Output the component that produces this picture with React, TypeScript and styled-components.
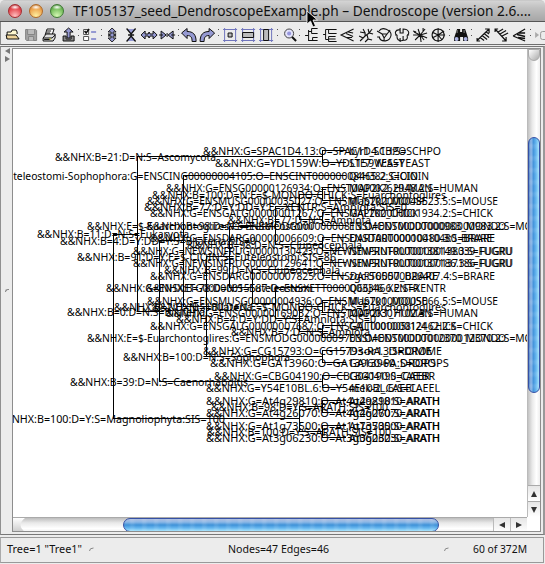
import React from "react";
import styled, { createGlobalStyle } from "styled-components";

const Global = createGlobalStyle`
  * { box-sizing: border-box; }
  body { margin: 0; background: #fff; overflow: hidden; font-family: "Noto Sans", "Open Sans", sans-serif; }
`;

const Win = styled.div`
  width: 545px; height: 564px; display: flex; flex-direction: column;
  background: #ececec; position: relative; overflow: hidden;
`;
const TitleBar = styled.header`
  height: 22px; flex: none; display: flex; align-items: center; padding-left: 8px;
  background: linear-gradient(#d4d4d4, #c0c0c0 35%, #a6a6a6);
  border-bottom: 1px solid #555; border-top: 1px solid #c9c9c9;
  border-radius: 5px 5px 0 0;
`;
const Light = styled.i<{ $c: string; $d: string; $l: string }>`
  width: 14px; height: 14px; border-radius: 50%; margin-right: 7px; flex: none;
  border: 1px solid ${p => p.$d};
  background: radial-gradient(ellipse 5px 2.5px at 50% 18%, #fff, transparent),
    radial-gradient(circle at 50% 90%, ${p => p.$l}, ${p => p.$c} 65%, ${p => p.$d});
`;
const Line = styled.svg`display: block; flex: none; overflow: visible;`;
const ToolBar = styled.nav`
  height: 23px; flex: none; display: flex; align-items: center; padding: 3px 0 0 3px;
  border-left: 1px solid #8a8a8a; border-bottom: 1px solid #6e6e6e; overflow: hidden;
`;
const Tool = styled.svg`width: 18.2px; height: 18px; flex: none; display: block;`;
const Sep = styled.span`
  width: 4.2px; height: 7px; flex: none; display: flex; flex-direction: column; align-items: center;
  justify-content: space-between; margin-bottom: 4px;
  &::before, &::after { content: ""; width: 1px; height: 1px; background: #555; }
`;
const Body = styled.main`
  height: 489px; margin-top: 1px; flex: none; display: grid;
  grid-template-columns: 11px 530px; border: 1px solid #777; border-left-color: #909090;
  border-right: 2px solid #999;
`;
const Gutter = styled.aside`
  display: flex; flex-direction: column; align-items: center; padding-top: 1px;
`;
const Pane = styled.section`
  border: 1px solid #8d8d8d; margin: 1px 1px 2px 0; background: #fff; display: grid;
  grid-template-columns: 514px 1fr; grid-template-rows: 1fr 15px; overflow: hidden;
`;
const Canvas = styled.svg`display: block; width: 514px; height: 468px;`;
const VBar = styled.div`
  display: flex; flex-direction: column; border-left: 1px solid #bbb;
  background: linear-gradient(90deg, #c2c2c2, #e9e9e9 35%, #fff 70%, #eee);
`;
const HBar = styled.div`
  display: flex; border-top: 1px solid #aaa;
  background: linear-gradient(#bdbdbd, #e9e9e9 35%, #fff 75%, #eee);
`;
const Corner = styled.div`
  height: 12px; margin-bottom: 76px; flex: none; border: 1px solid #aaa; border-radius: 0 0 6px 6px;
  background: linear-gradient(135deg, #fff, #aaa);
`;
const VThumb = styled.div`
  height: 256px; flex: none; border: 1px solid #3550a5; border-radius: 7px;
  background: repeating-linear-gradient(transparent 0 5px, #ffffff18 7px 9px, transparent 12px),
    linear-gradient(90deg, #5687c5, #91b9e8 20%, #4796dc 45%, #65b6ef 70%, #a7e3fb);
`;
const HThumb = styled.div`
  width: 316px; flex: none; border: 1px solid #3550a5; border-radius: 7px;
  background: repeating-linear-gradient(90deg, transparent 0 5px, #ffffff18 7px 9px, transparent 12px),
    linear-gradient(#b0bfe0, #8db8e6 25%, #3f92d8 50%, #65b6ef 75%, #a7e3fb);
`;
const Spring = styled.div`flex: 1;`;
const HCap = styled.div`
  width: 110px; flex: none; &::before {
    content: ""; display: block; width: 12px; height: 100%;
    background: linear-gradient(#fff, #ccc); clip-path: path("M0 0H12Q3 7 12 14H0Z");
  }
`;
const Arrow = styled.div<{ $v?: boolean }>`
  ${p => p.$v ? "height: 16px; border-top: 1px solid #aaa;" : "width: 17px; border-left: 1px solid #bbb;"}
  flex: none; display: flex; align-items: center; justify-content: center;
  background: linear-gradient(#e6e6e6, #fff);
`;
const Status = styled.footer`
  height: 26px; flex: none; margin-top: 2px; border: 1px solid #999; border-left-color: #aaa;
  margin-right: 1px; display: flex; align-items: center;
`;

type Label = [number, number, number, string];

const FIRST = 151;
const STEP = 12.48;

/* left, right, branch annotation, leaf name, leaf right edge */
const leaves: [number, number, string, string, number][] = [
  [203, 441, "&&NHX:G=SPAC1D4.13:O=SPAC1D4.13:S=SCHPO", "byr1_SCHPO", 406],
  [215, 430, "&&NHX:G=YDL159W:O=YDL159W:S=YEAST", "STE7_YEAST", 404],
  [-59, 429, "&&NHX:E=$-Euteleostomi-Sophophora:G=ENSCING00000004105:O=ENSCINT00000008465.2:S=CIOIN", "Q4H382_CIOIN", 418],
  [166, 478, "&&NHX:G=ENSG00000126934:O=ENST00000262948.2:S=HUMAN", "MAP2K2_HUMAN", 432],
  [147, 498, "&&NHX:G=ENSMUSG00000035027:O=ENSMUST00000048523.5:S=MOUSE", "Map2k2_MOUSE", 427],
  [150, 493, "&&NHX:G=ENSGALG00000001267:O=ENSGALT00000001934.2:S=CHICK", "MAP2K2_CHICK", 418],
  [87, 556, "&&NHX:E=$-Euarchontoglires:G=ENSMODG00000000813:O=ENSMODT00000000983.2:S=MONDO", "ENSMODT00000000983_MONDO", 506],
  [150, 495, "&&NHX:G=ENSDARG00000006609:O=ENSDART00000010480.3:S=BRARE", "ENSDART00000010480_BRARE", 492],
  [133, 512, "&&NHX:G=NEWSINFRUG00000130423:O=NEWSINFRUT00000138149.3:S=FUGRU", "NEWSINFRUT00000138039_FUGRU", 513],
  [133, 512, "&&NHX:G=NEWSINFRUG00000129641:O=NEWSINFRUT00000137186.3:S=FUGRU", "NEWSINFRUT00000137186_FUGRU", 513],
  [150, 495, "&&NHX:G=ENSDARG00000007825:O=ENSDART00000026407.4:S=BRARE", "zgc:56557_BRARE", 438],
  [106, 446, "&&NHX:G=ENSXETG00000015587:O=ENSXETT00000033466.2:S=XENTR", "Q66J46_XENTR", 419],
  [147, 498, "&&NHX:G=ENSMUSG00000004936:O=ENSMUST00000005066.5:S=MOUSE", "Map2k1_MOUSE", 427],
  [166, 478, "&&NHX:G=ENSG00000169032:O=ENST00000307102.3:S=HUMAN", "MAP2K1_HUMAN", 432],
  [150, 493, "&&NHX:G=ENSGALG00000007687:O=ENSGALT00000012462.2:S=CHICK", "GALT00010058124_CHICK", 456],
  [87, 556, "&&NHX:E=$-Euarchontoglires:G=ENSMODG00000009703:O=ENSMODT00000012370.2:S=MONDO", "ENSMODT00000012370_MONDO", 506],
  [203, 442, "&&NHX:G=CG15793:O=CG15793-RA.3:S=DROME", "Dsor1_DROME", 432],
  [210, 449, "&&NHX:G=GA13960:O=GA13960-PA:S=DROPS", "GA13960_DROPS", 436],
  [214, 435, "&&NHX:G=CBG04190:O=CBG04190:S=CAEBR", "CBG04190_CAEBR", 430],
  [206, 440, "&&NHX:G=Y54E10BL.6:O=Y54E10BL.6:S=CAEEL", "mek-2_CAEEL", 417],
  [206, 440, "&&NHX:G=At4g29810:O=At4g29810:S=ARATH", "At4g29810_ARATH", 440],
  [206, 440, "&&NHX:G=At4g26070:O=At4g26070:S=ARATH", "At4g26070_ARATH", 440],
  [206, 440, "&&NHX:G=At1g73500:O=At1g73500:S=ARATH", "At1g73500_ARATH", 440],
  [206, 440, "&&NHX:G=At3g06230:O=At3g06230:S=ARATH", "At3g06230_ARATH", 440],
];

/* left, right, vertical centre, annotation */
const inner: Label[] = [
  [55, 216, 157, "&&NHX:B=21:D=N:S=Ascomycota"],
  [152, 446, 195, "&&NHX:B=100:D=N:E=$-MONDO-CHICK:S=Euarchontoglires"],
  [144, 407, 207, "&&NHX:B=77:D=Y:DD=Y:E=-XENTR:S=Amniota:SIS=0"],
  [228, 371, 220, "&&NHX:B=77:D=N:S=Amniota"],
  [146, 313, 226, "&&NHX:B=98:D=N:S=Euteleostomi"],
  [37, 189, 234, "&&NHX:B=11:D=N:S=Eukaryota"],
  [60, 256, 241, "&&NHX:B=4:D=Y:DD=Y:S=Bilateria:SIS=0"],
  [187, 362, 245, "&&NHX:B=98:D=N:S=Clupeocephala"],
  [77, 336, 257, "&&NHX:B=91:D=Y:E=$-CIOIN:S=Euteleostomi:SIS=86"],
  [164, 340, 270, "&&NHX:B=99:D=N:S=Clupeocephala"],
  [146, 313, 288, "&&NHX:B=78:D=N:S=Euteleostomi"],
  [114, 252, 307, "&&NHX:B=2:D=N:S=Bilateria"],
  [152, 446, 307, "&&NHX:B=100:D=N:E=$-MONDO-CHICK:S=Euarchontoglires"],
  [67, 205, 312, "&&NHX:B=0:D=N:S=Bilateria"],
  [176, 376, 319, "&&NHX:B=4:D=Y:DD=Y:S=Amniota:SIS=0"],
  [231, 370, 332, "&&NHX:B=7:D=N:S=Amniota"],
  [123, 290, 357, "&&NHX:B=100:D=N:S=Sophophora"],
  [70, 248, 382, "&&NHX:B=39:D=N:S=Caenorhabditis"],
  [211, 388, 407, "&&NHX:B=98:D=Y:S=ARATH:SIS=100"],
  [-4, 225, 419, "&&NHX:B=100:D=Y:S=Magnoliophyta:SIS=100"],
  [207, 391, 432, "&&NHX:B=100:D=Y:S=ARATH:SIS=100"],
];

const pairs = [0, 3, 5, 7, 9, 12, 14, 16, 18, 20, 22];
const rowY = (i: number) => Math.round(FIRST + i * STEP);

const branches =
  "M137 234H113V418H299M113 234H137M137 156V311M137 156H322M137 311H159M159 240V381M159 240H183M159 381H322" +
  "M183 175V306M183 175H346M183 306H206M206 256V356M206 256H229M206 356H322" +
  "M229 226V287M229 226H275M229 287H252M252 269V303M252 269H322M252 303H275" +
  "M275 206V244M275 206H299M275 244H322M275 287V318M275 287H346M275 318H299" +
  "M299 194V219M299 194H322M299 219H322M299 306V331M299 306H322M299 331H322" +
  "M299 406V431M299 406H322M299 431H322";

const Fit = ({ l, r, y, t }: { l: number; r: number; y: number; t: string }) => (
  <text x={l} y={y + 4} textLength={r - l} lengthAdjust="spacingAndGlyphs">{t}</text>
);

const Tree = () => (
  <Canvas viewBox="13 49 514 468">
    <path d={branches + pairs.map(i => `M346 ${rowY(i) - 1}H322V${rowY(i + 1) - 1}H346`).join("")}
      fill="none" stroke="#000" shapeRendering="crispEdges" />
    <g fontSize="11" fill="#000" fontFamily='"Noto Sans", sans-serif'>
      {leaves.map(([l, r, t, n, e], i) => (
        <g key={i}>
          <Fit l={l} r={r} y={rowY(i)} t={t} />
          <Fit l={349} r={e} y={rowY(i)} t={n} />
        </g>
      ))}
      {inner.map(([l, r, y, t], i) => <Fit key={i} l={l} r={r} y={y} t={t} />)}
    </g>
  </Canvas>
);

const K = "#111";
const P = "#9599d2";
const icons: Record<string, React.ReactNode> = {
  open: <><path d="M3 13V6h4l1-2h4l1 2v2" fill="#fff8d0" stroke={K} /><path d="M3 13l-1-4h10l3 4z" fill="#efd49a" stroke={K} /></>,
  save: <><path d="M3.5 3.500h10l1 1v10h-10l-1-1z" fill="#a2a2a2" stroke="#858585" /><path d="M5.500 3.500v5h7v-5M6.500 14.500v-4h5v4" fill="#bbb" stroke="#858585" /></>,
  print: <><path d="M5 9l2-6h7l-2 6z" fill="#fff" stroke={K} /><path d="M7 5h4M6 7h4" stroke={K} /><path d="M3 12l3-4h9v4l-2 3H3z" fill="#ddd" stroke={K} /><path d="M3 12h9l3-3M4 13.5h6" fill="none" stroke={K} /><path d="M9 13h2" stroke="#cccc22" /></>,
  export: <><path d="M4 10v5h11v-5h-3v3H7v-3z" fill="#888" stroke={K} /><path d="M8 12V6H5l4.5-4L14 6h-3v6z" fill={P} stroke={K} /></>,
  list: <><path d="M2.5 3.5h5v5h-5zM2.5 10.5h5v4h-5z" fill="#fff" stroke="#555" /><path d="M3.5 5l1.5 2 3-4" stroke={K} fill="none" strokeWidth="1.6" /><path d="M10 6h5M10 13h5" stroke={P} strokeWidth="2" /></>,
  expandV: <path d="M9 2l4 4h-3v2h3l-2 1 2 1h-3v2h3l-4 4-4-4h3v-2H5l2-1-2-1h3V6H5z" fill={P} stroke={K} strokeWidth=".9" />,
  shrinkV: <><path d="M5 3h8L9 8zM5 15h8l-4-5z" fill={P} /><path d="M4.500 2.500L9 8l4.500-5.500M4.500 15.500L9 10l4.500 5.500M6 9h6" fill="none" stroke={K} strokeWidth="1.3" /></>,
  expandH: <path d="M1 9l4-4v3h3l1-2 1 2h3V5l4 4-4 4v-3h-3l-1 2-1-2H5v3z" fill={P} stroke={K} />,
  shrinkH: <><path d="M3 5v8l5-4zM15 5v8l-5-4z" fill={P} stroke={K} /><path d="M1 9h4M13 9h4M9 7v4" stroke={K} /></>,
  undo: <path d="M1.5 7L7 2.5v3c6 0 9 3 9 10h-4c0-4-1-6-5-6v3z" fill={P} stroke={K} />,
  redo: <path d="M16.5 7L11 2.5v3c-6 0-9 3-9 10h4c0-4 1-6 5-6v3z" fill={P} stroke={K} />,
  box1: <><path d="M3.500 2v14M14.500 2v14M2 3.500h14M2 14.500h14" stroke="#7075bd" /><path d="M7 7h4v4H7z" fill="#bbb" stroke={K} /></>,
  box2: <><path d="M3.500 2v14M14.500 2v14M2 3.500h14M2 14.500h14" stroke="#7075bd" /><path d="M3.500 6.500h11v5h-11z" fill="#bbb" stroke={K} /></>,
  box3: <><path d="M3.500 2v14M14.500 2v14M2 3.500h14M2 14.500h14" stroke="#7075bd" /><path d="M6.500 3.500h5v11h-5z" fill="#bbb" stroke={K} /></>,
  zoom: <><circle cx="9" cy="7.5" r="4.5" fill="#e3e3fa" stroke="#444" /><circle cx="9" cy="7.5" r="2" fill="#9696dc" /><path d="M12 11l4 4" stroke={K} strokeWidth="2" /></>,
  t1: <path d="M3 9.500h3M6.500 4v11M6.500 5.500h3M9.500 2.500v5M9.500 2.500h6M9.500 7.500h6M6.500 14.500h9M10.500 11.500h5M10.500 11.500v3" stroke={K} fill="none" />,
  t2: <path d="M3 8.500h2.500M5.500 3.500v10M5.500 3.500h11M8.500 3.500v4h8M5.500 13.500h3M8.500 10.500v5h8M8.500 10.500h7M8.500 13h7" stroke={K} fill="none" />,
  t3: <path d="M15.500 3L3 9l12.500 6M10 6l5 1M8 7.500l7 3M9 11.500h5" stroke={K} fill="none" strokeWidth="1.1" />,
  t4: <path d="M3 15l5-5 4-3 3-4M3 6l5 1v3M6 3l2 4M12 7l4 1M10 9l1 4 4 1M11 13l-3 3M2 10l4 2M11 3l1 4" stroke={K} fill="none" strokeWidth="1.1" />,
  t5: <path d="M4 5c3-5 12-1 12 4-1 7-10 8-12 2M2 5l5 3 2 4M7 8h5l3-4M9 12l3-4M2 11h3M9 12v3" stroke={K} fill="none" strokeWidth="1.1" />,
  t6: <path d="M7 4C2 3 1 8 4 9H2M4 9c-1 7 5 6 7 5M7 2v5h3V3c6 0 7 5 4 6h2M14 9c1 4-1 6-4 5v-4M7 12v4" stroke={K} fill="none" strokeWidth="1.1" />,
  t7: <path d="M9 9L7 3M9 9l5-6M9 9L3 6M9 9H2M9 9l7-2M9 9l7 3M9 9l-5 5M9 9l1 7M9 9l4 5M2 5l3 1M12 5V2" stroke={K} fill="none" strokeWidth="1.1" />,
  t8: <path d="M9 3a6 6 0 1 0 .1 0zM9 9V2M9 9L3 6M9 9l6-4M9 9h7M9 9v7M9 9l-6 3M9 9l4 5" stroke={K} fill="none" strokeWidth="1.1" />,
  find: <><path d="M5 3h3v3h2V3h3l3 9v3h-5v-4H8v4H2v-3z" fill={K} /><path d="M5 4v3M12 4v3" stroke="#888" /><circle cx="4.5" cy="13" r="2" fill="#aeb5e5" /><circle cx="13.5" cy="13" r="2" fill="#aeb5e5" /></>,
  d1: <path d="M3 14.500L15 3M11 3h4v4M6 11.500l4 3M8 9.500l5 4M10 7.500l5 4M12 6l3 2M3 12v3h3" stroke={K} fill="none" strokeWidth="1.2" />,
  d2: <path d="M3 3l11 12M10 15h4v-4M6 6l5-3M8 8l6-3.500M10 10l6-3M3 6V3h3" stroke={K} fill="none" strokeWidth="1.2" />,
  d3: <path d="M3 10L15 3M3 10l12 5M8 7l7 0M7 8.500l8 2M8 11.500l7 1" stroke={K} fill="none" strokeWidth="1.3" />,
  more: <><path d="M2 6l4 3-4 3z" fill="#aaa" /><rect x="7.5" y="5.5" width="8" height="8" rx="2" fill="none" stroke="#999" /></>,
};

const groups = [
  ["open", "save", "print", "export"], ["list"], ["expandV", "shrinkV", "expandH", "shrinkH"],
  ["undo", "redo"], ["box1", "box2", "box3"], ["zoom"],
  ["t1", "t2", "t3", "t4", "t5", "t6", "t7", "t8"], ["find"], ["d1", "d2", "d3"], ["more"],
];

const Pointer = styled.svg`position: absolute; left: 306px; top: 10px; width: 12px; height: 18px;`;
const Tri = ({ d, c = "#333" }: { d: string; c?: string }) => (
  <svg width="8" height="8" viewBox="0 0 8 8"><path d={d} fill={c} /></svg>
);
const Knob = styled.i<{ $top?: number }>`
  width: 4px; height: 3px; border: solid #888; border-width: 1px 0 0 1px; border-radius: 3px 0 0 0;
  margin-top: ${p => p.$top ?? 0}px; flex: none;
`;

export default function App() {
  return (
    <Win>
      <Global />
      <TitleBar>
        <Light $c="#e4434a" $d="#a52b30" $l="#ffc0c0" />
        <Light $c="#eca04a" $d="#b06a28" $l="#fff0a0" />
        <Light $c="#6fb956" $d="#3f7a35" $l="#d5f8b5" />
        <Line width="460" height="20">
          <text x="2" y="15" fontSize="14" fill="#111" textLength="458" lengthAdjust="spacingAndGlyphs">
            TF105137_seed_DendroscopeExample.ph – Dendroscope (version 2.6....
          </text>
        </Line>
      </TitleBar>
      <ToolBar>
        {groups.map((g, i) => (
          <React.Fragment key={i}>
            {i > 0 && <Sep />}
            {g.map(n => <Tool key={n} viewBox="0 0 18 18">{icons[n]}</Tool>)}
          </React.Fragment>
        ))}
      </ToolBar>
      <Body>
        <Gutter>
          <Tri d="M7 0v6L2 3z" c="#777" />
          <Tri d="M2 0v6l5-3z" c="#777" />
          <Knob $top={225} />
        </Gutter>
        <Pane>
          <Tree />
          <VBar>
            <Corner />
            <VThumb />
            <Spring />
            <Arrow $v><Tri d="M1 7h6L4 1z" /></Arrow>
            <Arrow $v><Tri d="M1 1h6L4 7z" /></Arrow>
          </VBar>
          <HBar>
            <HCap />
            <HThumb />
            <Spring />
            <Arrow><Tri d="M7 1v6L1 4z" /></Arrow>
            <Arrow><Tri d="M1 1v6l6-3z" /></Arrow>
          </HBar>
        </Pane>
      </Body>
      <Status>
        <Line width="542" height="24" fontSize="11" fill="#111">
          <text x="6" y="15" textLength="75" lengthAdjust="spacingAndGlyphs">Tree=1 "Tree1"</text>
          <path d="M88.500 13q0-3 4-3M443.500 13q0-3 4-3" fill="none" stroke="#888" />
          <text x="227" y="15" textLength="101" lengthAdjust="spacingAndGlyphs">Nodes=47 Edges=46</text>
          <text x="472" y="15" textLength="54" lengthAdjust="spacingAndGlyphs">60 of 372M</text>
        </Line>
      </Status>
      <Pointer viewBox="0 0 12 18">
        <path d="M1 1v13l3.500-3 2.500 6 2.500-1-2.500-6h4.500z" fill="#000" stroke="#fff" strokeWidth=".8" />
      </Pointer>
    </Win>
  );
}
